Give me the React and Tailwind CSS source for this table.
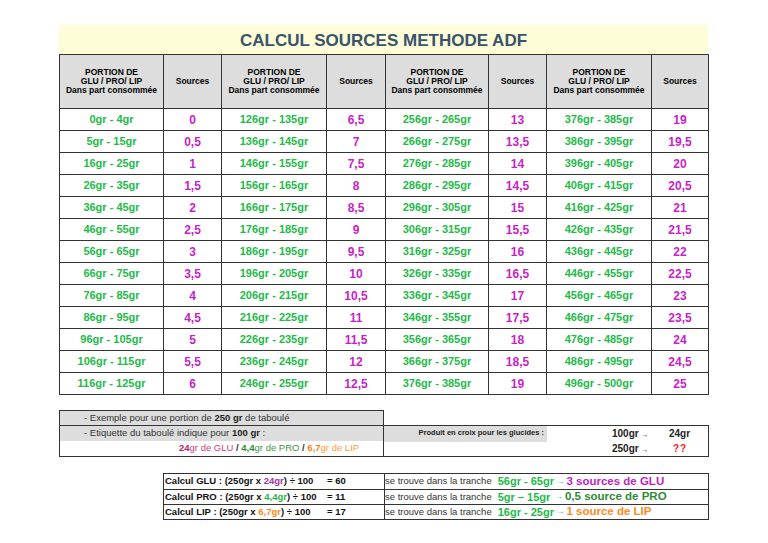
import React from 'react';

const ranges = [
  ['0gr - 4gr', '5gr - 15gr', '16gr - 25gr', '26gr - 35gr', '36gr - 45gr', '46gr - 55gr', '56gr - 65gr', '66gr - 75gr', '76gr - 85gr', '86gr - 95gr', '96gr - 105gr', '106gr - 115gr', '116gr - 125gr'],
  ['126gr - 135gr', '136gr - 145gr', '146gr - 155gr', '156gr - 165gr', '166gr - 175gr', '176gr - 185gr', '186gr - 195gr', '196gr - 205gr', '206gr - 215gr', '216gr - 225gr', '226gr - 235gr', '236gr - 245gr', '246gr - 255gr'],
  ['256gr - 265gr', '266gr - 275gr', '276gr - 285gr', '286gr - 295gr', '296gr - 305gr', '306gr - 315gr', '316gr - 325gr', '326gr - 335gr', '336gr - 345gr', '346gr - 355gr', '356gr - 365gr', '366gr - 375gr', '376gr - 385gr'],
  ['376gr - 385gr', '386gr - 395gr', '396gr - 405gr', '406gr - 415gr', '416gr - 425gr', '426gr - 435gr', '436gr - 445gr', '446gr - 455gr', '456gr - 465gr', '466gr - 475gr', '476gr - 485gr', '486gr - 495gr', '496gr - 500gr'],
];

// first "sources" value of each block of columns
const starts = [0, 6.5, 13, 19];

const fmt = (n) => String(n).replace('.', ',');
const cols = [104, 58, 105, 59, 103, 58, 105, 57];

const HeaderCells = () => (
  <>
    <th className="border border-[#333] bg-[#dddddd] text-[8.5px] leading-[9px] font-bold text-black">
      PORTION DE<br />GLU / PRO/ LIP<br />Dans part consommée
    </th>
    <th className="border border-[#333] bg-[#dddddd] text-[8.5px] font-bold text-black">Sources</th>
  </>
);

const calcRows = [
  { label: 'GLU', val: '24gr', valCls: 'text-[#a3329f]', res: '= 60', range: '56gr - 65gr', arrow: ' ', out: '3 sources de GLU', outCls: 'text-[#c21fc2]' },
  { label: 'PRO', val: '4,4gr', valCls: 'text-[#2cb548]', res: '= 11', range: '5gr – 15gr', arrow: '  ', out: '0,5 source de PRO', outCls: 'text-[#2e8b35]' },
  { label: 'LIP', val: '6,7gr', valCls: 'text-[#ff8a1a]', res: '= 17', range: '16gr - 25gr', arrow: ' ', out: '1 source de LIP', outCls: 'text-[#ff8a1a]' },
];

export default function App() {
  return (
    <div className="w-[768px] h-[543px] bg-white pt-[25px] pl-[59px] font-['Liberation_Sans',Arial,sans-serif]">
      <div className="w-[649px] h-[29px] bg-[#fdfdd8] flex items-center justify-center">
        <h1 className="text-[17px] font-bold text-[#3a536c] leading-none pt-[2px]">CALCUL SOURCES METHODE ADF</h1>
      </div>

      <table className="table-fixed border-collapse w-[649px]">
        <colgroup>
          {cols.map((w, i) => (
            <col key={i} style={{ width: w }} />
          ))}
        </colgroup>
        <thead>
          <tr className="h-[54px]">
            <HeaderCells />
            <HeaderCells />
            <HeaderCells />
            <HeaderCells />
          </tr>
        </thead>
        <tbody>
          {ranges[0].map((_, r) => (
            <tr key={r} className="h-[22px]">
              {ranges.map((block, b) => (
                <React.Fragment key={b}>
                  <td className="border border-[#333] text-center text-[11px] font-bold text-[#22bb48] p-0">{block[r]}</td>
                  <td className="border border-[#333] text-center text-[12px] font-bold text-[#c81fc8] p-0">{fmt(starts[b] + r * 0.5)}</td>
                </React.Fragment>
              ))}
            </tr>
          ))}
        </tbody>
      </table>

      {/* exemple */}
      <div className="flex w-[650px] mt-[15px] text-[9.5px]">
        <div className="w-[325px] border border-[#333] text-[#333]">
          <div className="h-[15px] bg-[#dddddd] border-b border-[#333] pl-[24px] flex items-center">
            <span>- Exemple pour une portion de <b className="text-[#222]">250 gr</b> de taboulé</span>
          </div>
          <div className="h-[15px] bg-[#dddddd] pl-[24px] flex items-center">
            <span>- Etiquette du taboulé indique pour <b className="text-[#222]">100 gr</b> :</span>
          </div>
          <div className="h-[15px] pl-[119px] flex items-center">
            <span>
              <b className="text-[#c2185b]">24</b><span className="text-[#c8407e]">gr de GLU</span>
              <b className="text-[#333]"> / </b>
              <b className="text-[#2e8b35]">4,4</b><span className="text-[#3c9a40]">gr de PRO</span>
              <b className="text-[#333]"> / </b>
              <b className="text-[#ff7f10]">6,7</b><span className="text-[#ff9a3c]">gr de LIP</span>
            </span>
          </div>
        </div>
        <div className="flex-1 mt-[15px] border-y border-r border-[#333] font-bold text-[#222]">
          <div className="h-[15px] flex items-center">
            <div className="w-[163px] h-[16px] bg-[#dddddd] text-right pr-[3px] text-[7.5px] leading-[13px]">Produit en croix pour les glucides :</div>
            <span className="ml-[65px] w-[57px] text-[10px]">100gr <span className="text-[7px]">→</span></span>
            <span className="text-[10px]">24gr</span>
          </div>
          <div className="h-[15px] flex items-center">
            <span className="ml-[228px] w-[61px] text-[10px]">250gr <span className="text-[7px]">→</span></span>
            <span className="text-[10px] text-[#ff1a1a] tracking-[1px]">??</span>
          </div>
        </div>
      </div>

      {/* calculs */}
      <div className="ml-[104px] mt-[16px] w-[546px] border border-[#333] flex flex-col">
        {calcRows.map((c, i) => (
          <div key={c.label} className={`flex h-[15px] ${i > 0 ? 'border-t border-[#333]' : ''}`}>
            <div className="w-[221px] border-r border-[#333] flex items-center pl-[1px] text-[9.5px] font-bold text-[#111]">
              <span className="w-[162px]">
                Calcul {c.label} : (250gr x <span className={c.valCls}>{c.val}</span>) ÷ 100
              </span>
              <span>{c.res}</span>
            </div>
            <div className="flex-1 flex items-center whitespace-pre">
              <span className="text-[9.5px] text-[#333]">se trouve dans la tranche</span>
              <span className="ml-[6px] text-[11px] font-bold text-[#22bb48]">{c.range}</span>
              <span className="text-[8px] font-bold text-[#22bb48]">{c.arrow}→ </span>
              <span className={`text-[11.5px] font-bold ${c.outCls}`}>{c.out}</span>
            </div>
          </div>
        ))}
      </div>
    </div>
  );
}
